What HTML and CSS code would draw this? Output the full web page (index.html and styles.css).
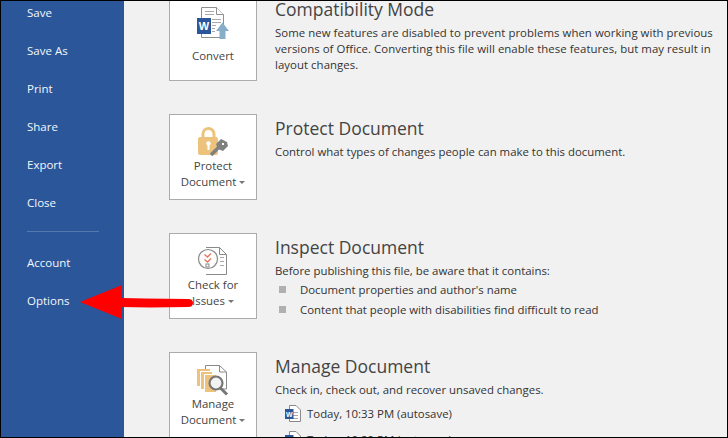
FILE: index.html
```html
<!DOCTYPE html>
<html lang="en">
<head>
<meta charset="utf-8">
<title>Info</title>
<link rel="stylesheet" href="styles.css">
</head>
<body>
<div class="window">
  <nav class="nav">
    <div class="nav-item">Save</div>
    <div class="nav-item">Save As</div>
    <div class="nav-item">Print</div>
    <div class="nav-item">Share</div>
    <div class="nav-item">Export</div>
    <div class="nav-item">Close</div>
    <div class="nav-rule"></div>
    <div class="nav-item">Account</div>
    <div class="nav-item">Options</div>
  </nav>
  <main class="main">
    <section class="sec sec-convert">
      <div class="btn">
        <svg class="ic" width="34" height="32" viewBox="0 0 34 32">
          <path d="M5.500 .5H20.500L27.500 7.500V30.500H5.500Z" fill="#fff" stroke="#8f8f8f"/>
          <path d="M20.500 .5V7.500H27.500" fill="#fff" stroke="#8f8f8f"/>
          <path d="M9 4.500h9M9 7.500h9M16 12.500h9M16 15.500h9M16 18.500h4M16 21.500h3M16 24.500h3" stroke="#a8a8a8"/>
          <rect x="1" y="11" width="14" height="16" fill="#2b579a"/>
          <text x="8" y="23" class="w-big">W</text>
          <path d="M26.500 15.500L33 24H29.500V32H23.500V24H20Z" fill="#86aec9"/>
        </svg>
        <div class="btn-label label-single"><span>Convert</span></div>
      </div>
      <div class="txt">
        <h2>Compatibility Mode</h2>
        <p class="wide">Some new features are disabled to prevent problems when working with previous<br>versions of Office. Converting this file will enable these features, but may result in<br>layout changes.</p>
      </div>
    </section>
    <section class="sec">
      <div class="btn">
        <svg class="ic" width="34" height="32" viewBox="0 0 34 32">
          <path d="M7 12V8a5.500 5.500 0 0 1 11 0v4" fill="none" stroke="#edc27d" stroke-width="3"/>
          <rect x="2" y="11" width="20" height="18" rx="2" fill="#edc27d"/>
          <circle cx="12.500" cy="17.500" r="2.200" fill="#fff"/><rect x="11.500" y="18" width="2" height="6" fill="#fff"/>
          <path d="M15 29L24 20" stroke="#808080" stroke-width="3.500"/>
          <path d="M25 13l6 3 1 4-5 5-5-2-2-5z" fill="#808080"/>
          <rect x="26" y="17" width="2" height="2" fill="#fff"/>
        </svg>
        <div class="btn-label"><span>Protect</span><span>Document <i class="caret"></i></span></div>
      </div>
      <div class="txt">
        <h2>Protect Document</h2>
        <p>Control what types of changes people can make to this document.</p>
      </div>
    </section>
    <section class="sec">
      <div class="btn">
        <svg class="ic" width="34" height="32" viewBox="0 0 34 32">
          <path d="M10 2.500H23.500L30.500 9.500V29.500H10" fill="#fff" stroke="#8a8a8a"/>
          <path d="M23.500 2.500V9.500H30.500" fill="none" stroke="#8a8a8a"/>
          <circle cx="12" cy="14" r="9.500" fill="#fff" stroke="#8a8a8a" stroke-width="1.200"/>
          <path d="M8.500 9.500l3 2.500 3.500-3.500M8.500 14.500l3 2.500 3.500-3.500" fill="none" stroke="#e8735a" stroke-width="1.300"/>
          <rect x="10" y="19" width="3" height="3" fill="none" stroke="#8a8a8a"/>
          <path d="M24 12.500h4M24 16.500h4M24 20.500h4" stroke="#a8a8a8"/>
        </svg>
        <div class="btn-label"><span>Check for</span><span>Issues <i class="caret"></i></span></div>
      </div>
      <div class="txt">
        <h2>Inspect Document</h2>
        <p>Before publishing this file, be aware that it contains:</p>
        <ul class="bullets">
          <li>Document properties and author's name</li>
          <li>Content that people with disabilities find difficult to read</li>
        </ul>
      </div>
    </section>
    <section class="sec">
      <div class="btn">
        <svg class="ic" width="34" height="32" viewBox="0 0 34 32">
          <path d="M9.500 1.500H23.500L30.500 8V25H9.500Z" fill="#fff" stroke="#8a8a8a"/>
          <path d="M23.500 1.500V8H30.500" fill="none" stroke="#8a8a8a"/>
          <rect x="1" y="5" width="13" height="17" fill="#edc27d"/>
          <rect x="4.500" y="7.500" width="12" height="18" fill="#edc27d" stroke="#fff"/>
          <rect x="8.500" y="10.500" width="12" height="18" fill="#edc27d" stroke="#fff"/>
          <circle cx="20" cy="19" r="6.500" fill="#f2f2f2" stroke="#777" stroke-width="2.200"/>
          <path d="M24.500 24L31 30.500" stroke="#777" stroke-width="3"/>
        </svg>
        <div class="btn-label"><span>Manage</span><span>Document <i class="caret"></i></span></div>
      </div>
      <div class="txt">
        <h2>Manage Document</h2>
        <p>Check in, check out, and recover unsaved changes.</p>
        <div class="ver"><svg width="16" height="17" viewBox="0 0 16 17"><path d="M4.500 .5H11L15.500 5V16.500H4.500Z" fill="#fff" stroke="#8a8a8a"/><path d="M8 7.500h5M8 10.500h5M8 13.500h5" stroke="#a8a8a8"/><rect x="0" y="4" width="8.500" height="10" fill="#2b579a"/><text x="4.200" y="11.500" class="w-small">W</text></svg><span>Today, 10:33 PM (autosave)</span></div>
        <div class="ver"><svg width="16" height="17" viewBox="0 0 16 17"><path d="M4.500 .5H11L15.500 5V16.500H4.500Z" fill="#fff" stroke="#8a8a8a"/><path d="M8 7.500h5M8 10.500h5M8 13.500h5" stroke="#a8a8a8"/><rect x="0" y="4" width="8.500" height="10" fill="#2b579a"/><text x="4.200" y="11.500" class="w-small">W</text></svg><span>Today, 10:29 PM (autosave)</span></div>
      </div>
    </section>
  </main>
  <svg class="arrow" width="114" height="36" viewBox="0 0 114 36">
    <path d="M0 18L42 1V14L65 14.500L108 15Q113 15 113 19Q113 23 108 23L70 23.500L42 23V35Z" fill="#fe0000"/>
  </svg>
</div>
</body>
</html>
```
FILE: styles.css
```css
html, body { margin: 0; padding: 0; }
body { width: 728px; height: 438px; overflow: hidden; font-family: "Open Sans", "Liberation Sans", sans-serif; }
.window { position: relative; display: flex; width: 728px; height: 438px; overflow: hidden; background: #f1f1f1; border: 1px solid #000; box-sizing: border-box; }
.nav { width: 123px; flex: none; background: #2b579a; color: #f4f6fa; display: flex; flex-direction: column; font-size: 11.5px; }
.nav-item { height: 38px; line-height: 24px; padding-left: 26px; flex: none; }
.nav-rule { width: 72px; height: 1px; flex: none; background: #557ab0; margin: 2px 0 19px 26px; }
.main { flex: 1; min-width: 0; overflow: hidden; color: #444; }
.sec { display: flex; height: 119px; margin-left: 45px; }
.sec-convert { margin-top: -6px; }
.btn { width: 88px; height: 86px; box-sizing: border-box; flex: none; border: 1px solid #ababab; background: #fff; display: flex; flex-direction: column; align-items: center; padding-top: 11px; }
.ic { display: block; flex: none; }
.btn-label { display: flex; flex-direction: column; align-items: center; font-size: 11.4px; line-height: 16px; color: #444; white-space: nowrap; }
.label-single { margin-top: 9px; }
.caret { display: inline-block; width: 0; height: 0; border: 3px solid transparent; border-top-color: #777; border-bottom: 0; vertical-align: 2px; }
.txt { margin-left: 18px; padding-top: 2px; white-space: nowrap; }
h2 { margin: 0 0 4px; font-weight: 400; font-size: 17.5px; line-height: 24px; color: #444; }
p { margin: 0; font-size: 11.4px; line-height: 16px; color: #333; }
.wide { letter-spacing: 0.05px; }
.bullets { list-style: none; margin: 0; padding: 0; font-size: 11.4px; color: #333; }
.bullets li { display: flex; align-items: center; height: 20px; gap: 14px; margin-left: 4px; }
.bullets li::before { content: ""; width: 7px; height: 7px; background: #b0b0b0; flex: none; }
.ver { display: flex; align-items: center; gap: 6px; height: 26px; margin-left: 10px; font-size: 11.4px; color: #333; }
.ver:first-of-type { margin-top: 2px; }
.ver svg { flex: none; }
.w-big { font: 700 11px "Liberation Sans", sans-serif; fill: #fff; text-anchor: middle; }
.w-small { font: 700 7px "Liberation Sans", sans-serif; fill: #fff; text-anchor: middle; }
.arrow { position: absolute; left: 79px; top: 283px; }
```
